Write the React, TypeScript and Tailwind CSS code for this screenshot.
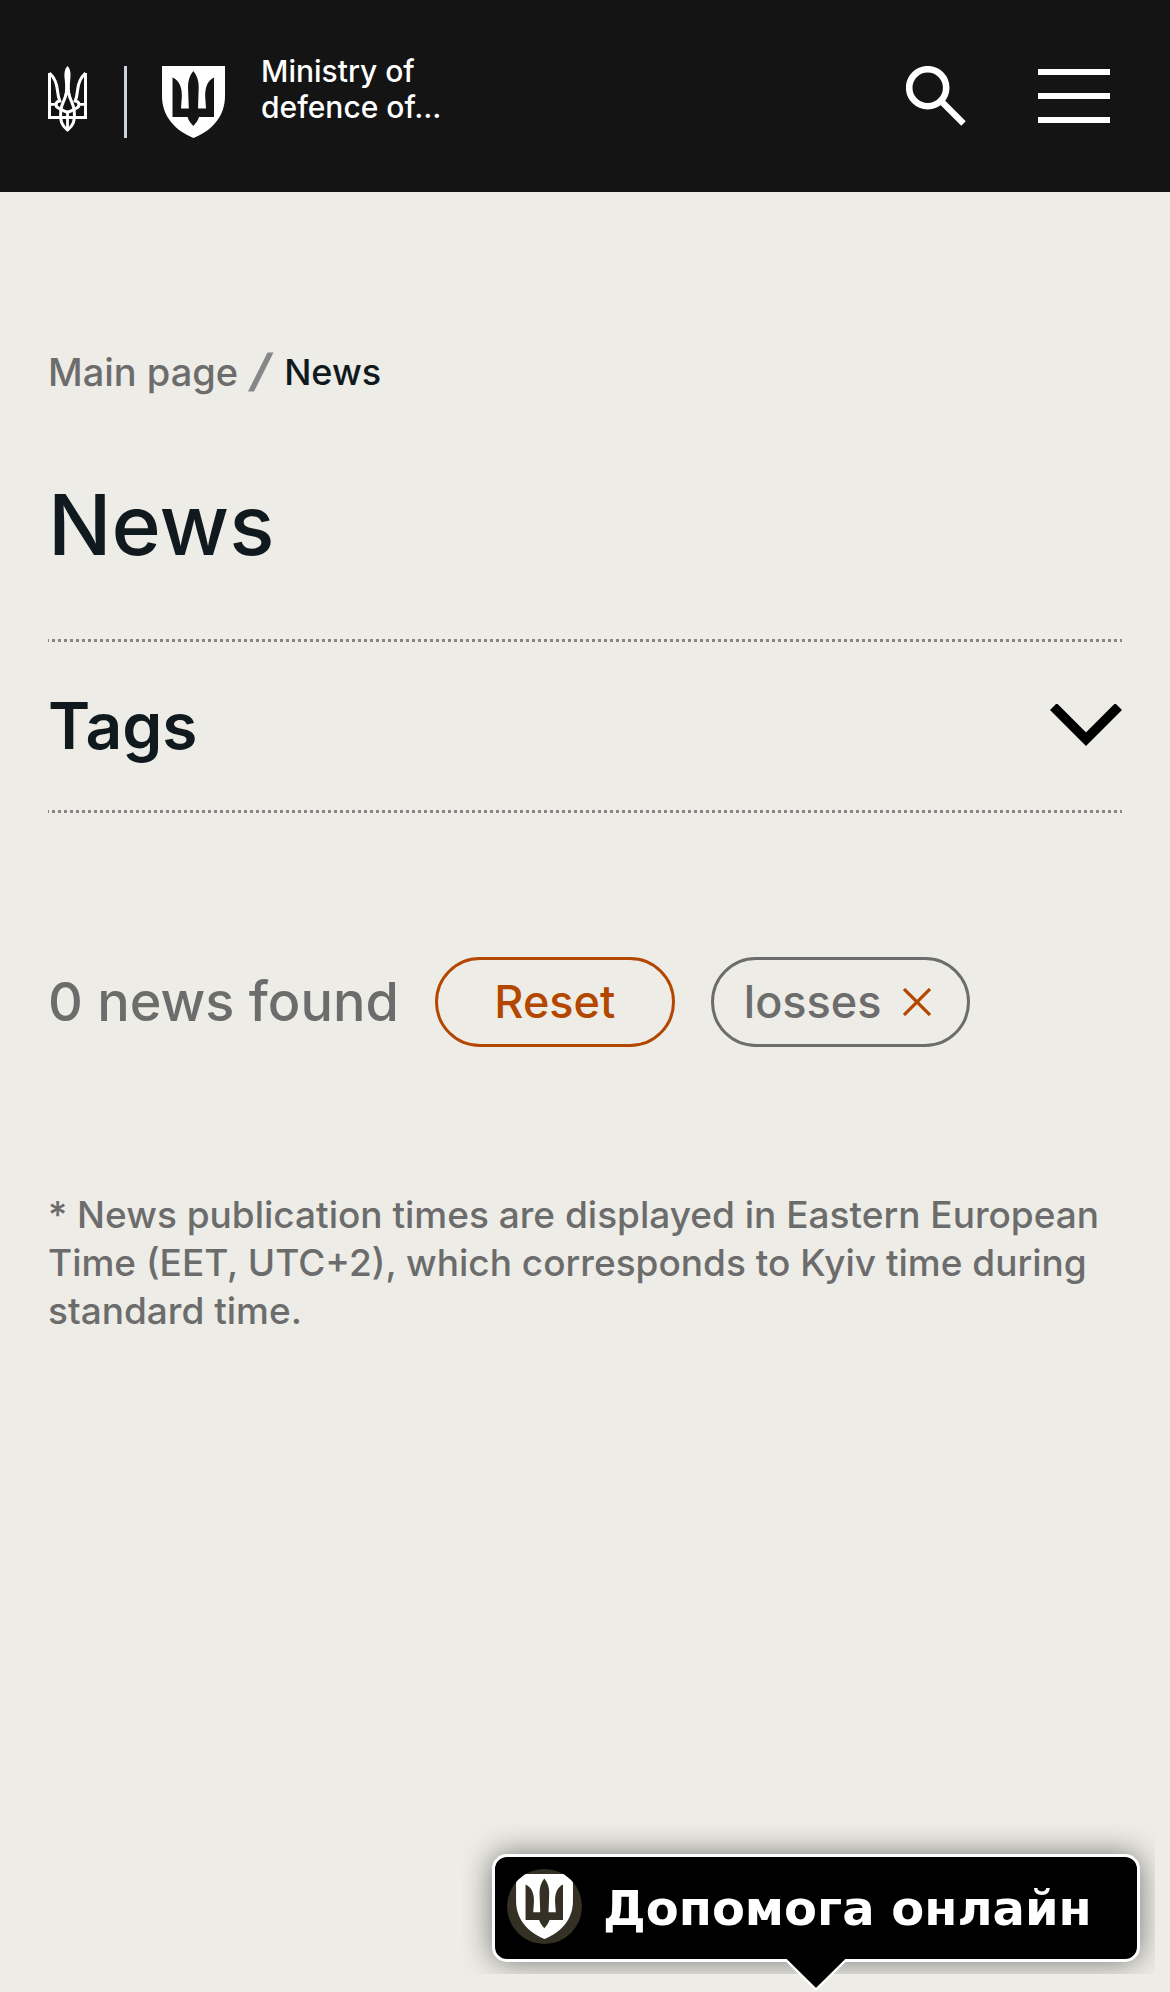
function Trident() {
  return (
    <svg viewBox="0 0 39 66" className="h-[66px] w-[39px]" fill="none" stroke="#fff" strokeWidth="2.8" aria-hidden="true">
      <path d="M19.5 0C22.6 3 23 8 22.2 14C21.6 20 21.8 25 22.6 31L19.5 28L16.4 31C17.2 25 17.4 20 16.8 14C16 8 16.4 3 19.5 0Z" fill="#fff" stroke="none" />
      <path d="M1.5 7V51.5H37.5V7" strokeWidth="3" />
      <path d="M1.5 7C7 12 8.8 18 9.4 24C9.8 28 10.2 31 11.8 35C7 35.5 7 41 11 42.3C14 43.3 16 46 19.5 46C23 46 25 43.3 28 42.3C32 41 32 35.5 27.2 35C28.8 31 29.2 28 29.6 24C30.2 18 32 12 37.5 7" strokeWidth="3" />
      <path d="M1 38.3H8.5M30.5 38.3H38" />
      <path d="M18.3 27C17.4 34 13 38 12.8 45C11.4 54 14 60 19.5 64C25 60 27.6 54 26.2 45C26 38 21.6 34 20.7 27" strokeWidth="3" />
      <path d="M19.5 45V64" />
    </svg>
  );
}

function Shield({ className }: { className: string }) {
  return (
    <svg viewBox="0 0 63 72" className={className} aria-hidden="true">
      <path d="M0 0H63V30C63 51 49 65 31.5 72C14 65 0 51 0 30Z" fill="#fff" />
      <path
        d="M10.5 11.5C17.5 14.5 20.3 22 19.8 31L19 42.5H26.8L26 21C26 15 27.5 9.5 31.3 5C35.1 9.5 36.8 15 36.7 21L36 42.5H44L43.2 31C43 22 45 15 52 11.5V51H37C36 54.5 34 57 31.3 60C28.6 57 26.6 54.5 25.6 51H10.5Z"
        fill="currentColor"
      />
    </svg>
  );
}

function DottedRule() {
  return (
    <div className="h-[3px] bg-[repeating-linear-gradient(to_right,#868686_0_3px,transparent_3px_6px)] bg-[position:4px_0]" />
  );
}

export default function App() {
  return (
    <div className="min-h-screen bg-[#edece6] font-['Inter',sans-serif] font-medium text-[#101a1e]">
      <header className="flex h-48 items-start bg-[#141414] pr-[60px] pl-12 text-white">
        <a href="#home" aria-label="Ministry of defence of Ukraine" className="flex pt-[53px]">
          <span className="mt-[13px] flex items-start">
            <Trident />
            <span className="ml-[37px] h-[72px] w-[3px] bg-[#cbd2dc]" />
            <Shield className="ml-[35px] h-[72px] w-[63px] text-[#141414]" />
          </span>
          <span className="ml-9 text-[30px] leading-9">
            Ministry of
            <br />
            defence of...
          </span>
        </a>
        <button type="button" aria-label="Search" className="mt-[66px] ml-auto">
          <svg viewBox="0 0 60 60" className="size-[60px]" fill="none" stroke="#fff" aria-hidden="true">
            <circle cx="21.7" cy="21.7" r="18.5" strokeWidth="6.6" />
            <path d="M35 35L57.5 57.5" strokeWidth="6.4" />
          </svg>
        </button>
        <button type="button" aria-label="Menu" className="mt-[69px] ml-[72px] flex w-[72px] flex-col gap-[18px]">
          <span className="h-1.5 w-full bg-white" />
          <span className="h-1.5 w-full bg-white" />
          <span className="h-1.5 w-full bg-white" />
        </button>
      </header>

      <main className="px-12 pt-[156px]">
        <nav aria-label="Breadcrumb" className="flex h-12 items-center text-[36px] leading-[48px]">
          <a href="#main" className="text-[38px] text-[#6c6c6c]">Main page</a>
          <svg viewBox="0 0 26 40" className="mx-2.5 h-10 w-[26px]" aria-hidden="true">
            <path d="M19.5 0.5H25.5L6 39.5H0Z" fill="#868888" />
          </svg>
          <span aria-current="page">News</span>
        </nav>

        <h1 className="mt-[81px] text-[84px] leading-[96px] font-medium">News</h1>

        <section className="mt-[66px]">
          <DottedRule />
          <button type="button" aria-expanded="false" className="flex h-[168px] w-full items-center justify-between text-left">
            <span className="text-[64px] leading-[72px] font-semibold">Tags</span>
            <svg viewBox="0 0 72 44" className="h-11 w-[72px]" fill="none" stroke="#000" strokeWidth="9.6" aria-hidden="true">
              <path d="M3.4 2.6L36 35.2L68.6 2.6" />
            </svg>
          </button>
          <DottedRule />
        </section>

        <section className="mt-36 flex items-center gap-9">
          <p className="text-[54px] leading-[60px] text-[#6c6c6c]">0 news found</p>
          <button type="button" className="h-[90px] w-60 rounded-full border-3 border-[#b34700] text-[45px] leading-[60px] text-[#b34700]">
            Reset
          </button>
          <button
            type="button"
            aria-label="Remove tag losses"
            className="flex h-[90px] items-center gap-[21px] rounded-full border-3 border-[#6c6c6c] pr-9 pl-[30px] text-[45px] leading-[60px] text-[#6c6c6c]"
          >
            losses
            <svg viewBox="0 0 28 28" className="size-7" fill="none" stroke="#b34700" strokeWidth="3.2" aria-hidden="true">
              <path d="M1 1L27 27M27 1L1 27" />
            </svg>
          </button>
        </section>

        <p className="mt-[144px] text-[37px] leading-[48px] text-[#6c6c6c]">
          * News publication times are displayed in Eastern European Time (EET, UTC+2), which corresponds to Kyiv time during standard time.
        </p>
      </main>

      <div className="fixed right-[15px] bottom-0 pb-[18px]">
        <div className="overflow-hidden p-[30px] pr-[15px] pb-3">
          <button
            type="button"
            className="flex h-[108px] w-[648px] items-center rounded-[15px] border-3 border-white bg-black pl-3 text-[48px] font-bold text-white shadow-[0_0_30px_rgba(0,0,0,0.5)]"
          >
            <span className="mb-1 flex size-[75px] items-center justify-center overflow-hidden rounded-full bg-[#343024] text-[#343024]">
              <Shield className="h-[65px] w-[57px]" />
            </span>
            <span className="ml-[21px] font-['DejaVu_Sans',sans-serif] whitespace-nowrap">Допомога онлайн</span>
          </button>
        </div>
        <svg viewBox="0 0 64 33" className="absolute right-[307px] bottom-0 h-[33px] w-16" aria-hidden="true">
          <path d="M2 0L32 30L62 0Z" fill="#000" />
          <path d="M1 0L32 30.5L63 0" fill="none" stroke="#fff" strokeWidth="2.4" />
        </svg>
      </div>
    </div>
  );
}
